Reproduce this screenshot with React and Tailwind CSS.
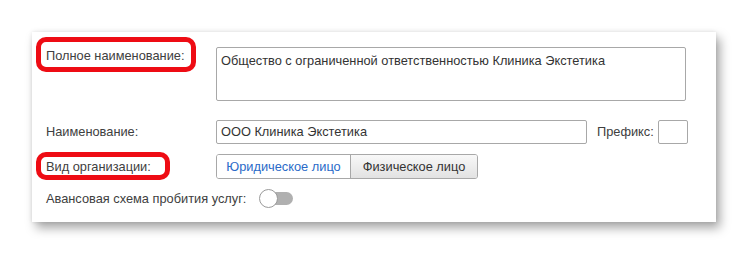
export default function App() {
  return (
    <div className="w-[748px] h-[254px] bg-white pl-[32px] pt-[32px]" style={{ fontFamily: '"Liberation Sans", Arial, sans-serif' }}>
      <div className="relative w-[684px] h-[190px] bg-white shadow-[4px_6px_10px_rgba(0,0,0,0.35),0_0_4px_rgba(0,0,0,0.1)] pt-[15px] text-[12.8px] text-[#404040]">
        {/* Row 1 */}
        <div className="flex">
          <div className="w-[184px] pl-[14px] pt-[1px] leading-[16px]">Полное наименование:</div>
          <div className="w-[470px] h-[54px] border border-[#a8a8a8] rounded-[2px] px-[4px] pt-[5px] leading-[16px] text-[#333]">
            Общество с ограниченной ответственностью Клиника Экстетика
          </div>
        </div>
        {/* Row 2 */}
        <div className="flex items-center mt-[19px] h-[24px]">
          <div className="w-[184px] pl-[14px] leading-[16px]">Наименование:</div>
          <div className="w-[371px] h-[24px] border border-[#a8a8a8] rounded-[2px] px-[4px] flex items-center text-[#333]">
            ООО Клиника Экстетика
          </div>
          <div className="ml-[10px] w-[61px] leading-[16px]">Префикс:</div>
          <div className="w-[30px] h-[24px] border border-[#a8a8a8] rounded-[2px]"></div>
        </div>
        {/* Row 3 */}
        <div className="flex items-center mt-[10px] h-[25px]">
          <div className="w-[184px] pl-[14px] leading-[16px]">Вид организации:</div>
          <div className="flex h-[25px] border border-[#a8a8a8] rounded-[3px] overflow-hidden">
            <div className="w-[133px] flex items-center justify-center bg-white text-[#2a6ac8]">Юридическое лицо</div>
            <div className="w-[127px] flex items-center justify-center border-l border-[#a8a8a8] bg-gradient-to-b from-[#f8f8f8] to-[#e2e2e2] text-[#333]">Физическое лицо</div>
          </div>
        </div>
        {/* Row 4 */}
        <div className="flex items-center mt-[10px] h-[19px] pl-[14px]">
          <div className="leading-[16px]">Авансовая схема пробития услуг:</div>
          <div className="relative ml-[13px] w-[34px] h-[19px]">
            <div className="absolute left-[8px] right-0 top-[3px] h-[13px] rounded-full bg-[#b0b0b0]"></div>
            <div className="absolute left-0 top-0 w-[19px] h-[19px] rounded-full bg-white border border-[#9a9a9a]"></div>
          </div>
        </div>
        {/* Annotations */}
        <div className="absolute left-[4px] top-[5px] w-[160px] h-[35px] border-[5px] border-[#ee0c14] rounded-[10px]"></div>
        <div className="absolute left-[4px] top-[120px] w-[134px] h-[28px] border-[5px] border-[#ee0c14] rounded-[10px]"></div>
      </div>
    </div>
  );
}
